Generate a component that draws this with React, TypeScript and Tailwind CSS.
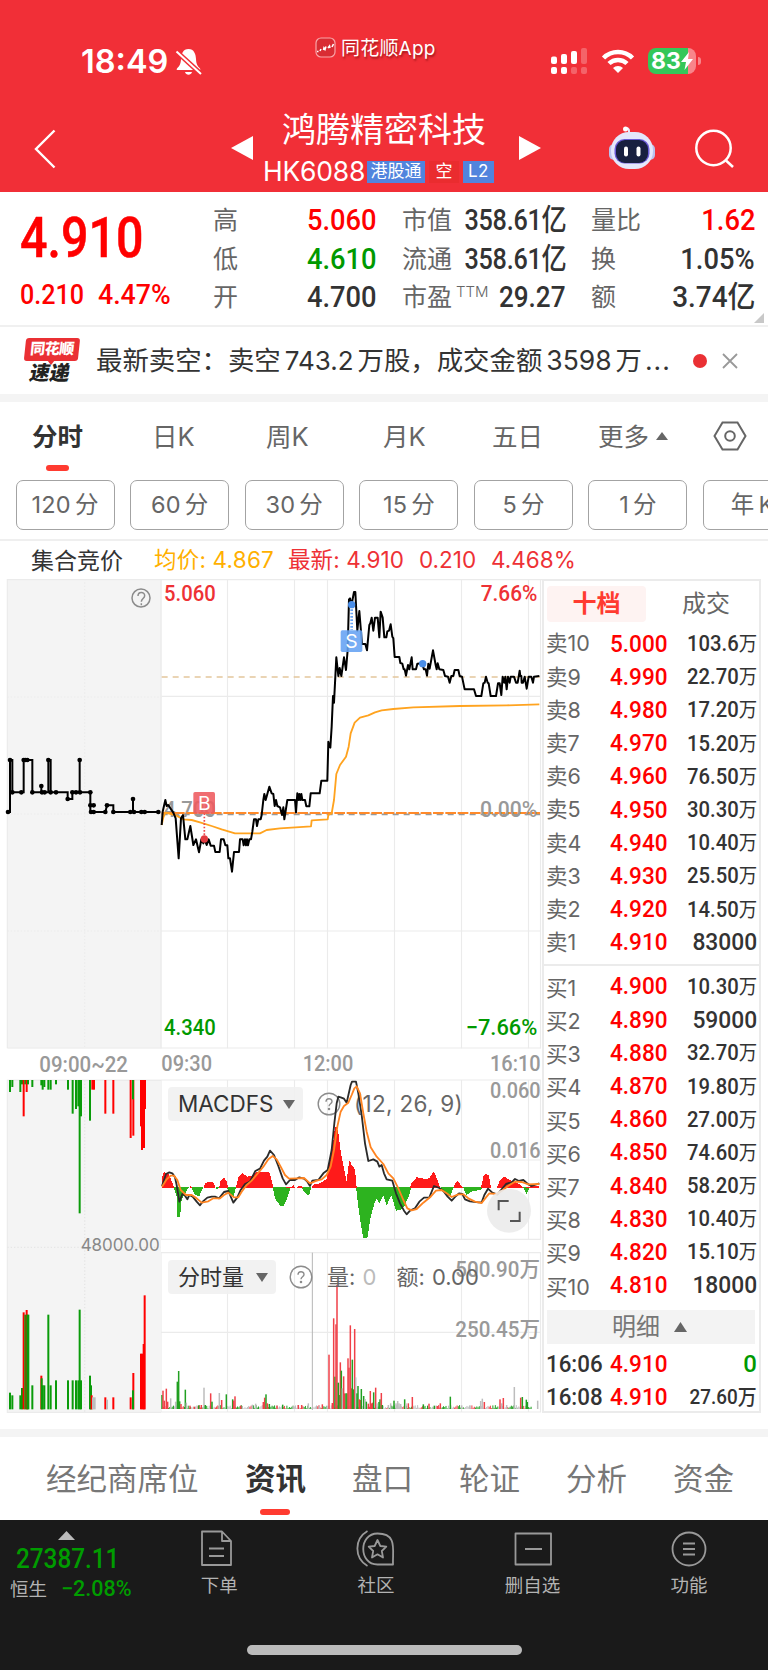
import React from 'react';
import clsx from 'clsx';

const NUM = "font-['Roboto','Noto_Sans_CJK_SC',sans-serif] font-medium inline-block whitespace-nowrap";

const SELLS = [
  ['卖10', '5.000', '103.6万'],
  ['卖9', '4.990', '22.70万'],
  ['卖8', '4.980', '17.20万'],
  ['卖7', '4.970', '15.20万'],
  ['卖6', '4.960', '76.50万'],
  ['卖5', '4.950', '30.30万'],
  ['卖4', '4.940', '10.40万'],
  ['卖3', '4.930', '25.50万'],
  ['卖2', '4.920', '14.50万'],
  ['卖1', '4.910', '83000'],
];

const BUYS = [
  ['买1', '4.900', '10.30万'],
  ['买2', '4.890', '59000'],
  ['买3', '4.880', '32.70万'],
  ['买4', '4.870', '19.80万'],
  ['买5', '4.860', '27.00万'],
  ['买6', '4.850', '74.60万'],
  ['买7', '4.840', '58.20万'],
  ['买8', '4.830', '10.40万'],
  ['买9', '4.820', '15.10万'],
  ['买10', '4.810', '18000'],
];

// chart coordinates are in thirds of a pixel
const PRICE =
  '485,765 488,725 496,690 500,708 505,705 512,716 520,728 527,745 536,865 543,745 549,735 556,808 562,808 571,768 580,825 588,808 597,847 604,808 610,820 614,808 620,825 626,808 632,827 642,827 646,846 659,846 663,808 671,808 676,826 682,826 685,865 690,865 696,905 702,846 717,846 720,808 728,808 731,826 735,808 738,826 741,808 744,826 748,808 753,808 757,785 762,748 768,748 771,768 775,748 782,748 785,735 790,690 793,672 797,690 808,650 815,670 820,672 824,708 828,690 832,708 840,712 846,735 850,712 853,748 862,690 885,690 888,727 892,670 896,690 898,672 901,690 904,672 907,690 915,690 919,709 928,709 932,670 959,670 964,632 982,632 985,515 988,530 991,533 995,470 999,378 1002,398 1009,262 1015,318 1019,294 1024,318 1032,262 1038,300 1043,240 1047,88 1050,85 1054,108 1062,66 1066,66 1072,182 1078,123 1086,222 1096,222 1101,241 1108,165 1111,160 1115,143 1120,182 1125,143 1133,143 1138,202 1142,125 1148,143 1153,202 1159,202 1162,184 1167,182 1172,163 1177,200 1180,205 1184,261 1198,261 1201,279 1207,281 1211,298 1214,298 1218,317 1224,285 1228,298 1235,262 1238,298 1248,298 1252,281 1266,280 1272,298 1277,298 1281,317 1285,281 1289,296 1299,241 1307,285 1310,298 1313,280 1318,298 1330,300 1335,318 1344,320 1349,338 1354,318 1360,318 1364,300 1375,300 1379,318 1386,320 1394,358 1422,358 1428,378 1444,378 1450,340 1454,338 1458,320 1463,338 1466,340 1472,378 1488,378 1494,340 1499,340 1504,375 1508,320 1513,338 1516,320 1520,358 1524,320 1529,338 1532,320 1542,320 1548,338 1553,338 1559,302 1561,318 1564,318 1565,338 1569,338 1574,320 1580,356 1586,320 1594,320 1599,338 1602,320 1618,318';

const AVERAGE =
  '485,765 490,742 496,728 528,736 550,748 575,750 600,757 635,768 665,778 705,790 780,790 800,780 840,775 933,769 935,751 983,748 985,735 995,730 1002,690 1009,612 1020,585 1038,560 1046,530 1052,490 1064,458 1080,443 1105,436 1125,427 1145,421 1180,417 1240,412 1380,408 1520,406 1618,403';

const AUCTION =
  '22,726 30,726 30,570 37,570 37,667 66,667 71,667 71,570 97,570 97,667 124,667 124,648 124,667 145,667 145,570 152,570 152,667 203,667 203,687 217,687 217,667 239,667 239,570 239,667 271,667 271,726 316,726 321,706 340,706 340,726 399,726 399,687 399,726 477,726';

const AUCTION_DOTS = [
  [24, 726], [30, 570], [37, 667], [64, 667], [71, 570], [76, 570], [82, 570], [97, 667], [124, 648], [126, 667],
  [134, 667], [145, 570], [152, 667], [168, 667], [203, 687], [217, 667], [228, 667], [240, 667], [239, 570],
  [271, 667], [271, 706], [281, 706], [273, 726], [281, 726], [316, 726], [321, 706], [340, 726], [391, 726],
  [399, 687], [402, 726], [424, 726], [434, 726], [475, 726],
];

const MACD_RED =
  '35,384 36,350 42,337 55,340 68,370 72,384 118,384 122,378 127,384 160,384 165,370 178,365 190,368 197,384 207,384 212,362 221,352 229,362 235,384 258,384 265,350 278,340 292,350 310,345 322,335 345,337 357,335 362,348 370,384 422,382 430,375 437,384 448,378 455,377 460,384 484,384 490,374 510,370 525,360 530,358 540,300 550,245 555,200 560,200 566,225 572,275 583,330 590,365 597,305 600,303 606,318 613,325 618,355 620,384 780,384 785,368 800,352 815,355 830,358 840,352 848,337 853,337 860,355 868,375 870,384 910,384 915,370 922,362 930,372 940,384 993,384 1000,350 1008,342 1017,347 1020,370 1024,384 1040,384 1050,360 1063,350 1080,360 1100,368 1112,375 1120,384 1148,378 1168,378 1168,384';

const MACD_GREEN =
  '35,380 70,380 80,410 82,472 90,472 95,420 105,400 118,380 122,380 135,405 148,408 160,380 195,380 201,390 208,380 230,380 240,405 250,412 258,380 368,380 375,415 390,437 402,437 415,405 422,380 452,380 465,398 477,407 484,380 618,380 625,440 632,490 640,535 652,535 662,470 675,425 680,415 688,430 700,405 710,437 724,405 738,452 750,450 765,435 780,400 783,380 870,380 885,402 900,410 912,380 938,380 950,405 965,395 995,388 997,380 1118,380 1130,402 1140,380 1168,380';

const DIF =
  '36,378 48,342 58,337 67,340 75,352 80,375 88,425 98,400 104,406 112,418 118,405 128,410 140,425 150,436 158,425 172,413 185,410 195,410 207,415 222,396 235,393 250,428 262,412 272,390 285,372 300,365 316,333 330,326 342,302 352,290 360,272 372,285 385,318 398,355 408,373 420,360 435,360 448,352 462,356 472,365 480,378 487,362 505,360 520,340 533,330 545,270 553,190 560,130 565,110 572,112 582,116 590,128 602,75 606,65 618,65 625,100 635,165 645,250 655,303 670,298 682,305 688,320 695,315 702,340 710,358 727,362 738,400 750,430 762,452 770,463 780,452 795,445 808,425 822,413 838,412 852,378 868,384 880,393 893,410 905,422 918,408 927,400 937,402 945,418 960,424 985,427 995,427 1003,405 1014,386 1027,398 1042,404 1055,388 1068,372 1085,367 1095,357 1107,363 1120,360 1135,373 1145,378 1168,370';

const DEA =
  '36,380 50,358 62,347 72,347 82,360 92,390 108,405 125,405 140,415 155,428 175,424 190,415 210,415 222,405 235,398 252,412 265,412 275,395 290,375 305,362 322,342 340,320 355,298 368,288 380,298 392,320 405,345 417,356 440,355 462,354 480,370 500,362 515,358 530,345 542,320 552,270 562,200 572,155 582,138 595,128 605,105 613,85 620,79 630,100 640,160 650,215 662,262 680,290 700,312 715,340 730,355 745,385 760,420 772,445 785,451 800,447 820,428 842,410 858,392 875,390 890,400 905,411 925,403 940,403 955,415 975,425 995,429 1008,412 1018,400 1040,402 1055,393 1075,377 1095,365 1115,366 1135,373 1168,372';

type Bar = [number, number, string];

const R = '#ff0000';
const G = '#0a9b0a';
const Y = '#bdbdbd';

const AUCTION_TOP: Bar[] = [
  [30, 185, G], [37, 170, G], [61, 185, G], [66, 162, G], [71, 258, R], [76, 162, G], [80, 185, R], [84, 162, G], [97, 170, G],
  [124, 165, G], [128, 178, G], [133, 170, G], [145, 178, G], [152, 178, G], [168, 162, G], [204, 178, G], [218, 250, G],
  [228, 236, G], [235, 228, G], [243, 258, G], [239, 549, G], [270, 271, G], [277, 178, R], [282, 178, R], [316, 250, R], [340, 250, R],
  [392, 323, R], [400, 316, R], [399, 207, G], [423, 288, R], [426, 359, R], [432, 353, R], [435, 236, R],
];

const AUCTION_BOTTOM: Bar[] = [
  [30, 1087, G], [37, 1095, G], [61, 1095, G], [66, 1073, G], [71, 846, R], [76, 853, G], [80, 839, R], [82, 853, G], [85, 853, G], [97, 1065, G],
  [124, 1036, R], [125, 1044, G], [128, 1065, G], [133, 1065, G], [145, 853, G], [152, 1065, G], [168, 1050, G], [204, 1050, G], [218, 1050, G],
  [228, 1050, G], [235, 1050, G], [243, 1050, G], [239, 838, G], [270, 1036, G], [273, 1065, G], [275, 1095, R], [279, 1101, Y], [284, 1101, Y],
  [316, 1101, R], [321, 1108, Y], [340, 1101, R], [392, 1101, R], [400, 1028, R], [399, 1080, G], [423, 970, R], [428, 970, R], [431, 941, R], [434, 795, R],
];

const r = '#f04048';
const g = '#22a022';

const VOLUME: Bar[] = [
  [36, 495, g], [39, 482, r], [43, 512, r], [49, 476, r], [53, 515, r], [62, 505, Y], [77, 515, Y], [82, 455, g], [86, 423, g], [89, 514, g],
  [93, 522, r], [106, 479, g], [109, 518, Y], [120, 527, r], [133, 530, r], [146, 526, g], [154, 525, r], [162, 473, Y], [166, 525, g], [182, 490, r],
  [186, 515, g], [208, 489, Y], [215, 510, r], [229, 493, g], [248, 508, g], [251, 512, r], [255, 499, r], [272, 527, r], [307, 524, Y], [317, 521, Y],
  [340, 516, r], [344, 503, r], [348, 493, g], [352, 520, r], [358, 522, g], [381, 527, r], [398, 524, g], [430, 528, Y], [445, 525, r], [455, 525, r],
  [475, 520, Y], [508, 528, Y], [517, 523, r], [531, 527, Y], [537, 374, r], [547, 519, r], [551, 265, r], [555, 440, g], [558, 283, r], [561, 165, r],
  [565, 458, g], [568, 495, g], [571, 397, r], [574, 422, g], [577, 475, Y], [581, 439, r], [584, 490, r], [588, 490, g], [591, 490, g], [594, 385, r],
  [597, 413, r], [601, 286, r], [604, 475, r], [607, 389, g], [611, 478, g], [614, 297, r], [617, 442, Y], [621, 490, g], [624, 468, g], [628, 508, r],
  [631, 510, r], [634, 477, g], [641, 498, g], [645, 507, Y], [649, 515, g], [655, 521, r], [661, 483, r], [665, 520, r], [668, 518, r], [671, 487, g],
  [677, 473, r], [681, 520, Y], [687, 516, g], [690, 508, g], [694, 489, r], [697, 525, g], [715, 525, Y], [722, 520, Y], [732, 512, g], [738, 520, Y],
  [743, 513, Y], [747, 520, Y], [752, 522, Y], [764, 508, g], [768, 520, Y], [775, 520, r], [787, 501, r], [820, 523, g], [837, 521, r], [853, 527, g],
  [862, 528, r], [871, 520, r], [901, 500, g], [935, 526, Y], [960, 526, Y], [992, 513, Y], [997, 506, Y], [1003, 516, r], [1050, 508, r], [1055, 520, Y],
  [1060, 504, r], [1070, 525, Y], [1093, 471, Y], [1112, 503, r], [1117, 501, g], [1129, 509, g], [1132, 516, g], [1163, 512, Y],
];

// quiet minutes between the listed peaks
const FLOOR: Bar[] = Array.from({ length: 300 }, (_, i) => {
  const n = (i * 7919 + 131) % 97;
  return [37 + i * 3.7, 535 - (n % 13) * 0.8, [g, r, Y, g, Y][n % 5]];
});

const GRID_X = [161, 227.5, 294.5, 327.5, 394.5, 461.5, 528.5, 540.5];

const Bars = ({ data, base, w }: { data: Bar[]; base: number; w: number }) => (
  <>
    {data.map(([x, y, fill], i) => (
      <rect key={i} x={x - w / 2} y={Math.min(y, base)} width={w} height={Math.abs(y - base)} fill={fill} />
    ))}
  </>
);

type LabelProps = { x: number; y: number; w: number; size?: number; fill: string; children: string };

const Label = ({ x, y, w, size = 66, fill, children }: LabelProps) => (
  <text x={x} y={y} textLength={w} lengthAdjust="spacingAndGlyphs" fontSize={size} fill={fill} fontFamily="Roboto, 'Noto Sans CJK SC', sans-serif" fontWeight={500}>
    {children}
  </text>
);

const Help = ({ className }: { className?: string }) => (
  <svg className={className} width="24" height="24" viewBox="0 0 24 24" fill="none" stroke="#8c8c8c" strokeWidth="1.4">
    <circle cx="12" cy="12" r="10.8" />
    <path d="M9 9.8c0-4 6-4 6-.4 0 2.300-3 2.300-3 4.800" />
    <circle cx="12" cy="17" r=".6" fill="#8c8c8c" />
  </svg>
);

const StatusBar = () => (
  <div className="flex h-[90px] items-start text-white">
    <div className="ml-[81px] mt-[42px] flex w-[234px] items-center gap-[7px]">
      <span className="text-[32.500px] font-semibold leading-10">18:49</span>
      <svg width="27" height="28" viewBox="0 0 27 28" fill="white">
        <path d="M13.500 1C8 1 6.200 6 6 11c-.2 5-1.500 7-4 9.500-.8 1-.2 1.500.7 1.500h21.600c.9 0 1.500-.5.7-1.500-2.500-2.500-3.800-4.500-4-9.500-.2-5-2-10-7.500-10zM10 24c1 3.500 6 3.500 7 0z" />
        <path d="M1.500 3.500 26 26" stroke="#f12f37" strokeWidth="5" />
        <path d="M1.500 3.500 26 26" stroke="white" strokeWidth="2" />
      </svg>
    </div>
    <div className="mt-[35px] flex w-[236px] items-center gap-[4px] [text-shadow:1px_2px_2px_rgba(90,0,0,0.5)]">
      <svg className="-mt-[2px]" width="22" height="22" viewBox="0 0 22 22" fill="none" stroke="white">
        <rect x="1" y="1" width="19" height="19" rx="5" fill="#d92c33" stroke="#f9a5a8" strokeWidth="1.200" />
        <path d="M2 14.500h1.500M5 14l1-2M8.500 13l.5-2 1 1.500 1-3M13 11l1.500-2 .5 2M17 10l1.500-3" strokeWidth="1.600" />
      </svg>
      <span className="text-[19px] leading-7 tracking-[0.200px]">同花顺App</span>
    </div>
    <svg className="mt-[48px]" width="37" height="27" viewBox="0 0 37 27" fill="white">
      <rect y="8.500" width="6" height="7.500" rx="2" />
      <rect x="10" y="6" width="6" height="10" rx="2" />
      <rect x="20" y="3" width="6" height="13" rx="2" />
      <rect x="30" width="6" height="16" rx="2" opacity=".25" />
      <rect y="19" width="6" height="7" rx="2" />
      <rect x="10" y="19" width="6" height="7" rx="2" />
      <rect x="20" y="19" width="6" height="7" rx="2" opacity=".25" />
      <rect x="30" y="19" width="6" height="7" rx="2" opacity=".25" />
    </svg>
    <svg className="ml-[13px] mt-[48px]" width="34" height="26" viewBox="0 0 34 26" fill="none" stroke="white" strokeWidth="4.500">
      <path d="M2.500 10a20.500 20.500 0 0 1 29 0M8 15.500a13 13 0 0 1 18 0" />
      <path d="M12 20a7 7 0 0 1 10 0l-5 5z" fill="white" stroke="none" />
    </svg>
    <div className="relative ml-[13px] mt-[48px] flex h-[26px] w-[48px] items-center overflow-hidden rounded-[8px] bg-[linear-gradient(90deg,#34c759_83%,#f8858a_83%)] pl-[3px]">
      <span className="text-[23px] font-bold leading-6">83</span>
      <svg width="12" height="18" viewBox="0 0 12 18" fill="white">
        <path d="M8 0 0 10h5L3.500 18 12 7H7z" />
      </svg>
    </div>
    <div className="ml-[2px] mt-[57px] h-2 w-[3px] rounded-r-full bg-[#f8858a]" />
  </div>
);

const Header = () => (
  <div className="flex h-[102px] items-start text-white">
    <svg className="ml-[34px] mt-[39px]" width="22" height="40" viewBox="0 0 22 40" fill="none" stroke="white" strokeWidth="2.400">
      <path d="M20.500 1.500 2 20l18.500 18.500" />
    </svg>
    <svg className="ml-[175px] mt-[46px]" width="22" height="24" fill="white">
      <path d="M22 0v24L0 12z" />
    </svg>
    <div className="flex w-[266px] flex-col items-center">
      <div className="mt-[16px] h-[47px] pr-[4px] text-[34px] leading-[48px]">鸿腾精密科技</div>
      <div className="flex h-[36px] w-[246px] items-center">
        <span className="w-[104px] text-[26.500px] leading-[36px] tracking-[-0.2px]">HK6088</span>
        <span className="mt-[2px] flex h-[22px] w-[58px] items-center justify-center bg-[#5184dd] text-[17px]">港股通</span>
        <span className="mt-[2px] ml-[4px] flex h-[22px] w-[30px] items-center justify-center bg-[#ea2c2f] text-[17px]">空</span>
        <span className="mt-[2px] ml-[4px] flex h-[22px] w-[31px] items-center justify-center bg-[#5184dd] text-[17px] tracking-wide">L2</span>
      </div>
    </div>
    <svg className="mt-[46px]" width="22" height="24" fill="white">
      <path d="M0 0v24l22-12z" />
    </svg>
    <svg className="ml-[67px] mt-[35px]" width="48" height="45" viewBox="0 0 48 45">
      <path d="M21 8c0-2 .5-5-3-5" fill="none" stroke="#e8ebff" strokeWidth="2" />
      <circle cx="17.500" cy="4" r="2.500" fill="#fff" />
      <rect x="1" y="19" width="46" height="16" rx="5" fill="#b9c2ee" />
      <rect x="3" y="7" width="42" height="37" rx="18" fill="#e4e7fb" />
      <rect x="6.500" y="14" width="35" height="24.500" rx="10" fill="#6a5bd6" />
      <rect x="8" y="15" width="32" height="23" rx="9" fill="#182040" />
      <rect x="16" y="21.500" width="4" height="10" rx="2" fill="white" />
      <rect x="28.500" y="21.500" width="4" height="10" rx="2" fill="white" />
    </svg>
    <svg className="ml-[39px] mt-[39px]" width="40" height="40" viewBox="0 0 40 40" fill="none" stroke="white" strokeWidth="2.500">
      <circle cx="18.500" cy="19" r="17.200" />
      <path d="m31 31.500 7 6.500" />
    </svg>
  </div>
);

const Quote = () => (
  <div className="relative flex h-[135px] border-b-2 border-[#f0f0f0] pl-5">
    <div className="w-[193px] text-[#ff0000]">
      <div className={clsx(NUM, 'mt-[14px] h-[64px] origin-left scale-x-[0.88] text-[55px] leading-[64px] [-webkit-text-stroke:0.5px_#ff0000]')}>4.910</div>
      <div className="mt-[7px] flex text-[27px] leading-[36px]">
        <span className={clsx(NUM, 'w-[78px] origin-left scale-x-[0.93]')}>0.210</span>
        <span className={clsx(NUM, 'origin-left scale-x-[0.99]')}>4.47%</span>
      </div>
    </div>
    <QuoteCol className="w-[164px]" rows={[['高', '5.060', 'text-[#ff0000]'], ['低', '4.610', 'text-[#009900]'], ['开', '4.700', 'text-[#333]']]} />
    <QuoteCol className="ml-[25px] w-[164px]" rows={[['市值', '358.61亿', 'text-[#333]'], ['流通', '358.61亿', 'text-[#333]'], ['市盈', '29.27', 'text-[#333]']]} />
    <QuoteCol className="ml-[25px] w-[164px]" rows={[['量比', '1.62', 'text-[#ff0000]'], ['换', '1.05%', 'text-[#333]'], ['额', '3.74亿', 'text-[#333]']]} />
    <svg className="absolute right-1 bottom-[2px]" width="10" height="10" fill="#c8c8c8">
      <path d="M10 0v10H0z" />
    </svg>
  </div>
);

const valueScale = (value: string) => {
  if (value === '358.61亿') return '-ml-[30px] scale-x-[0.84] tracking-[-0.300px]';
  if (value === '29.27') return 'scale-x-[0.87]';
  return value === '3.74亿' ? 'scale-x-[0.93]' : 'scale-x-[0.91]';
};

const QuoteCol = ({ rows, className }: { rows: string[][]; className: string }) => (
  <div className={clsx('pt-[9px]', className)}>
    {rows.map(([label, value, color]) => (
      <div key={label} className="flex h-[38.500px] items-center justify-between text-[25px] leading-[38px] text-[#666]">
        <span className="flex whitespace-nowrap">
          {label}
          {label === '市盈' && <sup className="top-0 ml-[4px] -mt-[4px] text-[15px] font-light leading-[36px]">TTM</sup>}
        </span>
        <span className={clsx(NUM, 'origin-right text-[30px]', valueScale(value), color)}>{value}</span>
      </div>
    ))}
  </div>
);

const News = () => (
  <div className="flex h-[67px] items-center pl-6">
    <div className="relative flex h-[46px] w-[56px] flex-col items-center">
      <div className="flex h-[23px] w-[54px] -skew-x-6 items-center justify-center rounded-[3px] bg-[#ea3034] text-[15px] font-black tracking-[-0.5px] text-white">同花顺</div>
      <svg className="absolute top-[22px] left-[23px]" width="8" height="5" fill="#ea3034">
        <path d="M0 0h8L4 5z" />
      </svg>
      <div className="mt-[1px] -skew-x-12 pr-[5px] text-[20px] font-black leading-[24px] text-[#222]">速递</div>
    </div>
    <div className="ml-[16px] w-[574px] whitespace-nowrap text-[26.400px] leading-9 text-[#333]">
      最新卖空：卖空<span className="mx-[4px] text-[26px]">743.2</span>万股，成交金额<span className="mx-[4px] text-[26.500px]">3598</span>万<span className="ml-[3px] tracking-[1px]">...</span>
    </div>
    <span className="ml-[23px] size-[14px] rounded-full bg-[#ea3034]" />
    <svg className="ml-[15px]" width="16" height="16" stroke="#999" strokeWidth="1.800">
      <path d="m1 1 14 14M15 1 1 15" />
    </svg>
  </div>
);

const PERIODS = ['120分', '60分', '30分', '15分', '5分', '1分', '年K'];

const Periods = () => (
  <div className="border-t-[8px] border-b-[9px] border-t-[#f4f4f4] border-b-transparent">
    <div className="flex h-[78px] items-start overflow-hidden pt-[17px] text-[25.500px] leading-9 text-[#666]">
      <div className="ml-[32px] w-[120px]">
        <div className="w-[52px] font-bold text-[#333]">分时</div>
        <div className="mt-[10px] ml-[14px] h-[6px] w-[23px] rounded-[3px] bg-[#ff3b30]" />
      </div>
      <span className="w-[114px]">日K</span>
      <span className="w-[117px]">周K</span>
      <span className="w-[109px]">月K</span>
      <span className="w-[106px]">五日</span>
      <span className="w-[51px]">更多</span>
      <svg className="mt-[13px] ml-[7px]" width="12" height="8" fill="#666">
        <path d="M6 0l6 8H0z" />
      </svg>
      <svg className="mt-[2px] ml-[45px]" width="34" height="30" viewBox="0 0 34 30" fill="none" stroke="#666" strokeWidth="2">
        <path d="M9.500 1.500h15L32.500 15l-8 13.500h-15L1.500 15z" />
        <circle cx="17" cy="15" r="4.800" />
      </svg>
    </div>
    <div className="flex h-[50px] gap-[15.600px] overflow-hidden pl-[15.500px]">
      {PERIODS.map((p) => (
        <div key={p} className="flex w-[99px] shrink-0 items-center justify-center rounded-[7px] border border-[#a3a3a3] text-[23.500px] text-[#666]">
          <span className="mr-[4px] tracking-[0.200px]">{p.slice(0, -1)}</span>
          {p.slice(-1)}
        </div>
      ))}
    </div>
  </div>
);

const PriceInfo = () => (
  <div className="flex h-[40px] items-center border-t-2 border-[#efefef] pl-[31px] text-[22.500px] whitespace-nowrap text-[#ee3135]">
    <span className="w-[123px] pt-[2px] text-[23px] text-[#333]">集合竞价</span>
    <span className="w-[134px] tracking-[0.200px] text-[#ffb000]">均价: 4.867</span>
    <span className="w-[131px] tracking-[0.100px]">最新: 4.910</span>
    <span className="w-[72px]">0.210</span>
    <span>4.468%</span>
  </div>
);

const PriceChart = () => (
  <svg className="block" width="542" height="470" viewBox="0 27 1626 1410" fill="none">
    <rect x="22" y="27" width="463" height="1408" fill="#f4f4f4" />
    <g stroke="#ebebeb" strokeWidth="3.500">
      <path d="M22 29H1626M485 379H1623M485 1083H1623M22 1434H1623M22 27V1435" />
      {GRID_X.map((x) => (
        <path key={x} d={`M${x * 3} 27V1435`} />
      ))}
      <path d="M254 27V1435M22 381H485M22 732H485M22 1083H485" strokeDasharray="4 6" />
    </g>
    <path d="M485 321H1620" stroke="#e3c69c" strokeWidth="4.500" strokeDasharray="18 15" />
    <path d="M485 733H1620" stroke="#999" strokeWidth="5" strokeDasharray="18 15" />
    <Label x={492} y={94} w={155} fill="#ee3135">5.060</Label>
    <Label x={1442} y={94} w={170} fill="#ee3135">7.66%</Label>
    <Label x={492} y={742} w={155} fill="#999">4.700</Label>
    <Label x={492} y={1395} w={155} fill="#009900">4.340</Label>
    <Label x={1397} y={1395} w={215} fill="#009900">−7.66%</Label>
    <path d="M485 729H1620" stroke="#ff8a2a" strokeWidth="6" strokeDasharray="32 5" />
    <polyline points={AVERAGE} stroke="#ffa31f" strokeWidth="5.500" strokeLinejoin="round" />
    <polyline points={PRICE} stroke="#000" strokeWidth="6" strokeLinejoin="round" />
    <Label x={1440} y={742} w={172} fill="#999">0.00%</Label>
    <polyline points={AUCTION} stroke="#000" strokeWidth="6" />
    {AUCTION_DOTS.map(([x, y], i) => (
      <circle key={i} cx={x} cy={y} r="7" fill="#000" />
    ))}
    <path d="M613 730V800" stroke="#ee4a4e" strokeWidth="5" strokeDasharray="5 5" />
    <circle cx="613" cy="807" r="11" fill="#e23a40" />
    <rect x="580" y="666" width="65" height="65" rx="5" fill="#ee5a5e" fillOpacity=".88" />
    <text x="613" y="719" textAnchor="middle" fontSize="58" fill="#fff" fontFamily="Inter">B</text>
    <path d="M1055 108V180" stroke="#6aa6f5" strokeWidth="8" strokeDasharray="5 5" />
    <circle cx="1055" cy="104" r="11" fill="#4a8ee8" />
    <circle cx="1268" cy="281" r="11" fill="#4a8ee8" />
    <rect x="1022" y="181" width="65" height="65" rx="5" fill="#64a2f2" fillOpacity=".88" />
    <text x="1054.500" y="235" textAnchor="middle" fontSize="58" fill="#fff" fontFamily="Inter">S</text>
    <g stroke="#8c8c8c" strokeWidth="4.500">
      <circle cx="423" cy="84" r="27" />
      <path d="M414 78c0-14 20-14 20-1 0 8-10 9-10 18M424 100v6" />
    </g>
  </svg>
);

const TimeAxis = () => (
  <svg className="block" width="542" height="30" viewBox="0 0 1626 90">
    <Label x={118} y={69} w={266} fill="#999">09:00~22</Label>
    <Label x={484} y={65} w={152} fill="#999">09:30</Label>
    <Label x={908} y={65} w={152} fill="#999">12:00</Label>
    <Label x={1470} y={65} w={152} fill="#999">16:10</Label>
  </svg>
);

const AuctionVolume = () => (
  <svg className="block" width="161" height="334" viewBox="0 146 483 1002">
    <rect x="22" y="148" width="461" height="1000" fill="#f4f4f4" />
    <path d="M22 150H483M22 148V1148M22 1146H483" stroke="#ebebeb" strokeWidth="3.500" />
    <path d="M254 150V1146M22 651H483" stroke="#e6e6e6" strokeWidth="4" strokeDasharray="4 6" />
    <Bars data={AUCTION_TOP} base={149} w={6} />
    <Bars data={AUCTION_BOTTOM} base={1137} w={6} />
    <text x="242" y="661" textLength="237" lengthAdjust="spacingAndGlyphs" fontSize="53" fill="#888" fontFamily="Inter">48000.00</text>
  </svg>
);

const Grid = ({ top, mid, bottom }: { top: number; mid: number; bottom: number }) => (
  <g stroke="#ebebeb" strokeWidth="3.500">
    <path d={`M33 ${top}H1173M33 ${mid}H1173M33 ${bottom}H1173`} />
    {GRID_X.map((x) => (
      <path key={x} d={`M${(x - 150) * 3} ${top}V${bottom}`} />
    ))}
  </g>
);

const Selector = ({ name, className }: { name: string; className: string }) => (
  <div className={clsx('flex h-[34px] items-center justify-between rounded-[4px] bg-[#f1f1f1]/90 pr-[8px] pl-[10px] text-[#333]', className)}>
    <span>{name}</span>
    <svg width="12" height="9" fill="#666">
      <path d="M0 0h12L6 9z" />
    </svg>
  </div>
);

const MacdPanel = () => (
  <div className="relative h-[162px]">
    <svg className="block" width="381" height="162" viewBox="33 57 1143 486" fill="none">
      <Grid top={60} mid={300} bottom={538} />
      <Label x={1020} y={114} w={152} fill="#999">0.060</Label>
      <Label x={1020} y={293} w={152} fill="#999">0.016</Label>
      <polygon points={MACD_GREEN} fill="#2db31f" shapeRendering="crispEdges" />
      <polygon points={MACD_RED} fill="#ff1a1a" shapeRendering="crispEdges" />
    </svg>
    <div className="absolute top-0 left-0 flex items-center pt-[8px] pl-[7px]">
      <Selector name="MACDFS" className="w-[135px] text-[22.500px]" />
      <Help className="ml-[14px]" />
      <span className="ml-[13px] text-[22.500px] tracking-[0.300px] text-[#666]">(12, 26, 9)</span>
    </div>
    <svg className="absolute top-0 left-0" width="381" height="162" viewBox="33 57 1143 486" fill="none" strokeLinejoin="round">
      <polyline points={DIF} stroke="#2b2b2b" strokeWidth="5.500" />
      <polyline points={DEA} stroke="#ff8421" strokeWidth="5.500" />
      <circle cx="1077" cy="452" r="66" fill="#ebebeb" fillOpacity=".9" />
      <path d="M1046 451V423H1076M1080 483H1109V455" stroke="#555" strokeWidth="6" strokeLinejoin="miter" />
    </svg>
  </div>
);

const VolumePanel = () => (
  <div className="relative h-[162px]">
    <svg className="block" width="381" height="162" viewBox="33 63 1143 486" fill="none">
      <Grid top={68} mid={307} bottom={546} />
      <path d="M487 68V540" stroke="#b5b5b5" strokeWidth="3" />
      <Bars data={FLOOR} base={537} w={3} />
      <Bars data={VOLUME} base={537} w={4.5} />
      <Label x={916} y={141} w={254} fill="#999">500.90万</Label>
      <Label x={916} y={321} w={254} fill="#999">250.45万</Label>
    </svg>
    <div className="absolute top-0 left-0 flex items-center pt-[9px] pl-[7px] text-[22px] whitespace-nowrap text-[#666]">
      <Selector name="分时量" className="w-[108px]" />
      <Help className="ml-[13px]" />
      <span className="ml-[14px]">量: <span className="ml-[1px] text-[#bbb]">0</span></span>
      <span className="ml-[20px]">额: <span className="ml-px">0.00</span></span>
    </div>
  </div>
);

const DepthRow = ({ row, buy }: { row: string[]; buy?: boolean }) => (
  <div className="flex h-[33.200px] items-center text-[21.500px] whitespace-nowrap text-[#666]">
    <span className={clsx('-ml-[1px] w-[64px]', buy && 'pt-[3px]')}>{row[0]}</span>
    <span className={clsx(NUM, 'w-[60px] origin-left scale-x-[0.94] text-[24px] text-[#ff0000]')}>{row[1]}</span>
    <span className="ml-auto text-[#333]">
      {row[2].endsWith('万') ? (
        <span className={clsx(NUM, '-mt-[6px] origin-right scale-x-[0.92] text-[22px]')}>
          {row[2].slice(0, -1)}
          <span className="text-[20px] font-normal">万</span>
        </span>
      ) : (
        <span className={clsx(NUM, 'origin-right scale-x-[0.95] text-[24px]')}>{row[2]}</span>
      )}
    </span>
  </div>
);

const Depth = () => (
  <div className="h-[834px] w-[219px] border-[2px] border-[#ebebeb] pl-[3px]">
    <div className="mt-[4px] flex h-[37px] items-center text-[24px] leading-9">
      <span className="w-[99px] rounded-[4px] bg-[#fef3f2] text-center font-bold text-[#ff3b30]">十档</span>
      <span className="ml-[36px] text-[#666]">成交</span>
    </div>
    <div className="mt-[5px] pr-[2px]">
      {SELLS.map((row) => <DepthRow key={row[0]} row={row} />)}
    </div>
    <div className="mt-[5px] -ml-[3px] h-[2px] bg-[#ebebeb]" />
    <div className="mt-[4px] pr-[2px]">
      {BUYS.map((row) => <DepthRow key={row[0]} row={row} buy />)}
    </div>
    <div className="mt-[8px] mr-[4px] flex h-[34px] items-center justify-center gap-[14px] bg-[#f3f3f3] pr-[3px] text-[24px] leading-8 text-[#777]">
      明细
      <svg width="13" height="10" fill="#666">
        <path d="M6.500 0 13 10H0z" />
      </svg>
    </div>
    <div className="mt-[4px] pr-[2px] text-[24px] leading-[33px]">
      {[['16:06', '0'], ['16:08', '27.60万']].map(([time, qty]) => (
        <div key={time} className="flex items-center whitespace-nowrap">
          <span className={clsx(NUM, '-ml-[1px] w-[64px] origin-left scale-x-[0.93] text-[#333]')}>{time}</span>
          <span className={clsx(NUM, 'origin-left scale-x-[0.94] text-[#ff0000]')}>4.910</span>
          <span className={clsx(NUM, 'ml-auto origin-right', qty === '0' ? 'text-[#009900]' : 'scale-x-[0.9] text-[21px] text-[#333]')}>{qty}</span>
        </div>
      ))}
    </div>
  </div>
);

const Market = () => (
  <div className="flex h-[842px]">
    <div className="w-[542px]">
      <PriceChart />
      <TimeAxis />
      <div className="flex h-[334px]">
        <AuctionVolume />
        <div className="flex flex-col justify-between">
          <MacdPanel />
          <VolumePanel />
        </div>
      </div>
    </div>
    <Depth />
  </div>
);

const SectionTabs = () => (
  <div className="flex h-[91px] border-t-[8px] border-[#f4f4f4] pt-[20px] pl-[46px] text-[30.500px] leading-[44px] whitespace-nowrap text-[#777]">
    <span className="w-[199px]">经纪商席位</span>
    <div className="w-[107px] text-[#333]">
      <div className="font-bold">资讯</div>
      <div className="mt-[8px] ml-[15px] h-[6px] w-[30px] rounded-[3px] bg-[#ff3b30]" />
    </div>
    <span className="w-[107px]">盘口</span>
    <span className="w-[107px]">轮证</span>
    <span className="w-[107px]">分析</span>
    <span>资金</span>
  </div>
);

const NavItem = ({ label, children }: { label: string; children: React.ReactNode }) => (
  <div className="flex w-[156.600px] flex-col items-center text-[18.500px] leading-6 text-[#b3b3b3]">
    <svg className="mt-[10px] mb-[6px]" width="40" height="37" viewBox="0 0 40 37" fill="none" stroke="#999" strokeWidth="1.800" strokeLinejoin="round">
      {children}
    </svg>
    {label}
  </div>
);

const BottomNav = () => (
  <div className="h-[150px] bg-[#1a1a1a]">
    <div className="flex h-[125px]">
      <div className="flex w-[141px] flex-col pt-[11px] text-[#009c00]">
        <svg className="ml-[58px]" width="17" height="9" fill="#bbb">
          <path d="M8.500 0 17 9H0z" />
        </svg>
        <span className={clsx(NUM, 'mt-[1px] ml-[16px] origin-left scale-x-[0.9] text-[27px] leading-[36px]')}>27387.11</span>
        <div className="-mt-[2px] flex items-center pl-[10px] leading-[26px]">
          <span className="w-[51px] pt-[1px] text-[18.500px] text-[#b3b3b3]">恒生</span>
          <span className={clsx(NUM, 'origin-left text-[21.500px]')}>−2.08%</span>
        </div>
      </div>
      <NavItem label="下单">
        <path d="M3 1.500h20l9 9.500v24H3zM23 1.500v9.500h9M10 18.500h15M10 26h15" />
      </NavItem>
      <NavItem label="社区">
        <path d="M21.500 3.500c20 0 15 16 15.500 31H21.500c-19 0-19-31 0-31z" />
        <path d="M11.500 1C-2 9-2 28 11.500 36M21.500 10l2.800 6 6 .7-4.500 4.300 1.200 6.500-5.500-3.200-5.500 3.200 1.200-6.500-4.500-4.300 6-.7z" />
      </NavItem>
      <NavItem label="删自选">
        <path d="M3.500 3.500h35.500v31H3.500zM13 19h17" />
      </NavItem>
      <NavItem label="功能">
        <circle cx="20" cy="19" r="16.500" />
        <path d="M14 13.500h12M14 19h12M14 24.500h12" />
      </NavItem>
    </div>
    <div className="mx-auto h-[10px] w-[275px] rounded-full bg-[#bbb]" />
  </div>
);

export default function App() {
  return (
    <div className="h-[1670px] w-[768px] overflow-hidden bg-white font-['Inter','Noto_Sans_CJK_SC',sans-serif]">
      <div className="h-[192px] bg-[#f12f37]">
        <StatusBar />
        <Header />
      </div>
      <Quote />
      <News />
      <Periods />
      <PriceInfo />
      <Market />
      <div className="h-[8px]" />
      <SectionTabs />
      <BottomNav />
    </div>
  );
}
